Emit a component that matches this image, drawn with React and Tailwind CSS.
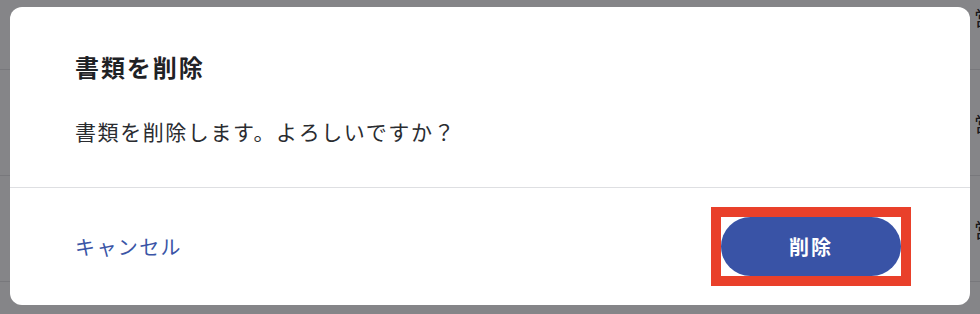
const rows = [0, 1, 2];

export default function App() {
  return (
    <div
      className="relative w-[980px] h-[314px] overflow-hidden bg-white"
      style={{ fontFamily: '"Noto Sans CJK JP", "Noto Sans", sans-serif' }}
    >
      {/* page behind the dialog */}
      <div className="flex flex-col">
        {rows.map((i) => (
          <div key={i} className="flex h-[106px] shrink-0 items-start justify-end border-b border-[#e4e4e6] first:-mt-[36px]">
            <span className="mt-[44px] mr-[-14px] text-[20px] leading-none text-[#222]">営</span>
          </div>
        ))}
      </div>

      {/* overlay */}
      <div className="absolute inset-0 bg-[#0b0c12]/[0.5]" />

      {/* dialog */}
      <div className="absolute left-[10px] top-[7px] flex h-[298px] w-[960px] flex-col rounded-[12px] bg-white">
        <div className="flex flex-col px-[65px] pt-[44px] pb-[41px]">
          <h2 className="text-[24px] font-bold leading-[32px] tracking-[0.08em] text-[#1f2226]">書類を削除</h2>
          <p className="mt-[33px] text-[21px] leading-[30px] tracking-[0.075em] text-[#2a2c30]">
            書類を削除します。よろしいですか？
          </p>
        </div>
        <div className="h-px bg-[#dedfe2]" />
        <div className="flex flex-1 items-center justify-between pl-[65px] pr-[59px]">
          <button className="text-[20px] leading-[30px] tracking-[0.07em] text-[#3a55a6]">キャンセル</button>
          <div className="border-[10px] border-[#e9402a] bg-white">
            <button className="flex h-[59px] w-[180px] items-center justify-center rounded-full bg-[#3953a6] text-[20px] font-bold tracking-[0.1em] text-white">
              削除
            </button>
          </div>
        </div>
      </div>
    </div>
  );
}
